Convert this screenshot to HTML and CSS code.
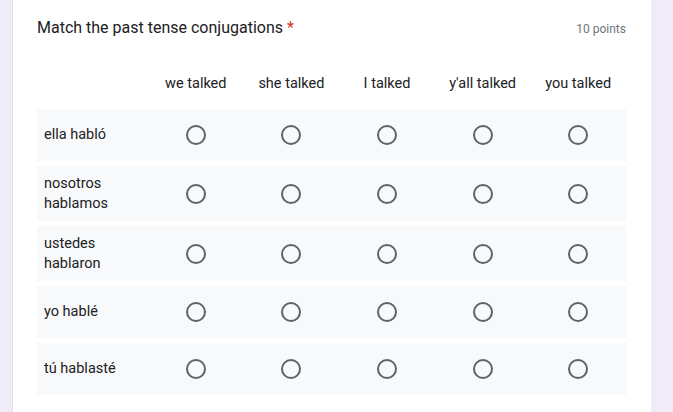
FILE: index.html
```html
<!DOCTYPE html>
<html>
<head>
<meta charset="utf-8">
<link rel="stylesheet" href="styles.css">
</head>
<body>
<div class="card">
  <div class="head">
    <div class="title">Match the past tense conjugations <span class="req">*</span></div>
    <div class="points">10 points</div>
  </div>
  <div class="grid">
    <div class="row header">
      <div></div>
      <div class="col">we talked</div>
      <div class="col">she talked</div>
      <div class="col">I talked</div>
      <div class="col">y'all talked</div>
      <div class="col">you talked</div>
    </div>
    <div class="row item">
      <div class="label">ella habló</div>
      <div class="cell"><span class="radio"></span></div>
      <div class="cell"><span class="radio"></span></div>
      <div class="cell"><span class="radio"></span></div>
      <div class="cell"><span class="radio"></span></div>
      <div class="cell"><span class="radio"></span></div>
    </div>
    <div class="row item">
      <div class="label">nosotros hablamos</div>
      <div class="cell"><span class="radio"></span></div>
      <div class="cell"><span class="radio"></span></div>
      <div class="cell"><span class="radio"></span></div>
      <div class="cell"><span class="radio"></span></div>
      <div class="cell"><span class="radio"></span></div>
    </div>
    <div class="row item">
      <div class="label">ustedes hablaron</div>
      <div class="cell"><span class="radio"></span></div>
      <div class="cell"><span class="radio"></span></div>
      <div class="cell"><span class="radio"></span></div>
      <div class="cell"><span class="radio"></span></div>
      <div class="cell"><span class="radio"></span></div>
    </div>
    <div class="row item">
      <div class="label">yo hablé</div>
      <div class="cell"><span class="radio"></span></div>
      <div class="cell"><span class="radio"></span></div>
      <div class="cell"><span class="radio"></span></div>
      <div class="cell"><span class="radio"></span></div>
      <div class="cell"><span class="radio"></span></div>
    </div>
    <div class="row item">
      <div class="label">tú hablasté</div>
      <div class="cell"><span class="radio"></span></div>
      <div class="cell"><span class="radio"></span></div>
      <div class="cell"><span class="radio"></span></div>
      <div class="cell"><span class="radio"></span></div>
      <div class="cell"><span class="radio"></span></div>
    </div>
  </div>
</div>
</body>
</html>
```

FILE: styles.css
```css
html, body {
  margin: 0;
  padding: 0;
  background: #f0ebf8;
  height: 100%;
  overflow: hidden;
}
body {
  font-family: Roboto, "Liberation Sans", sans-serif;
  color: #202124;
}
.card {
  margin-left: 12px;
  width: 639px;
  height: 100%;
  box-sizing: border-box;
  background: #fff;
  border-left: 1px solid #e3e0ea;
  padding: 16px 25px 0 24px;
}
.head {
  display: flex;
  justify-content: space-between;
  align-items: baseline;
}
.title {
  font-size: 16px;
  line-height: 24px;
}
.req {
  color: #d93025;
}
.points {
  font-size: 12px;
  color: #70757a;
  line-height: 16px;
}
.grid {
  margin-top: 34px;
  display: flex;
  flex-direction: column;
  gap: 5px;
}
.row {
  display: grid;
  grid-template-columns: 111px repeat(5, 1fr);
  align-items: center;
}
.header {
  font-size: 14.5px;
  line-height: 20px;
  padding-bottom: 10px;
}
.col {
  text-align: center;
}
.item {
  background: #f8f9fa;
  min-height: 52px;
  padding: 7.5px 0;
  box-sizing: border-box;
  font-size: 14.5px;
  line-height: 20px;
}
.label {
  padding-left: 7px;
  padding-right: 16px;
}
.cell {
  display: flex;
  justify-content: center;
}
.radio {
  width: 20px;
  height: 20px;
  box-sizing: border-box;
  border: 2px solid #5f6368;
  border-radius: 50%;
}
```
